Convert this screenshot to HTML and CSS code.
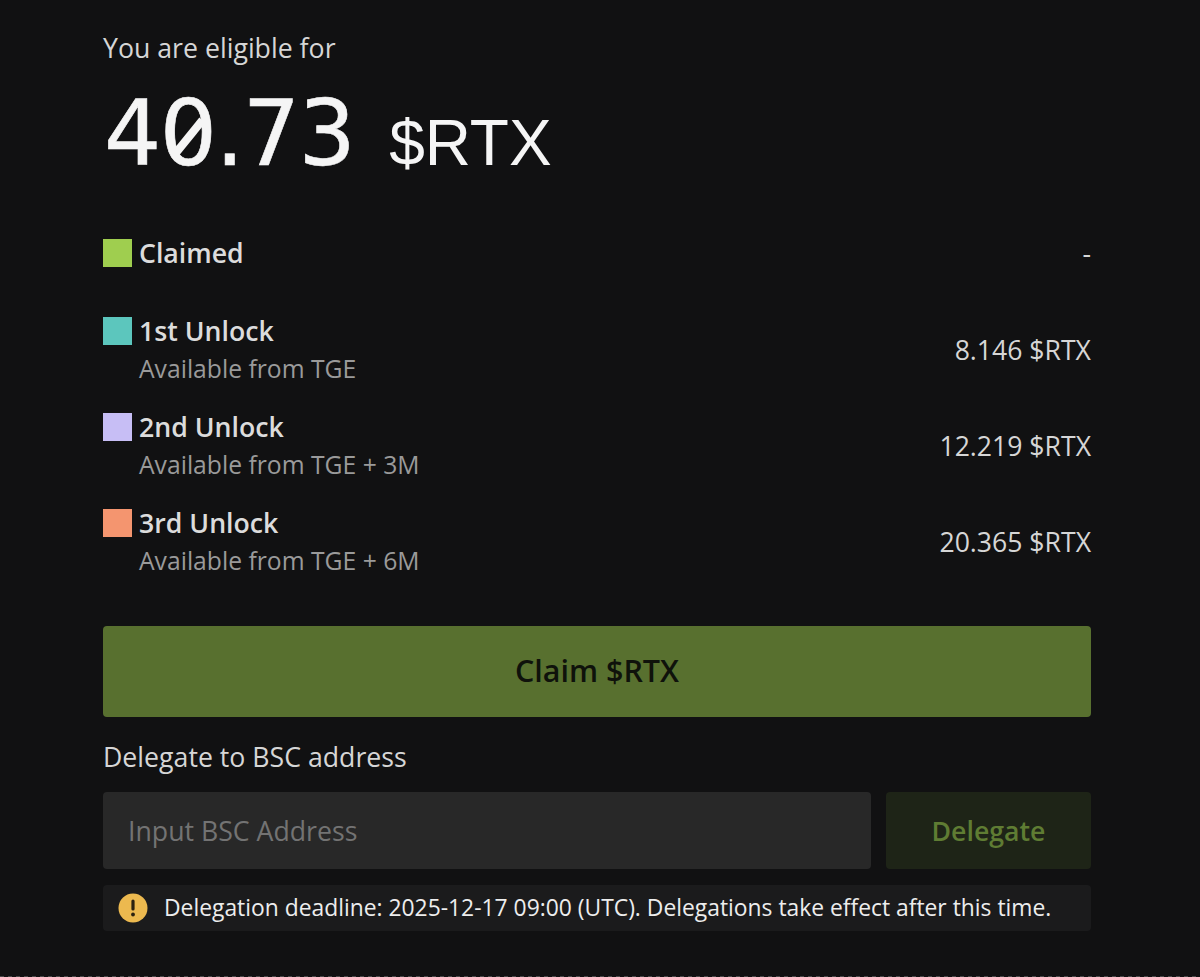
FILE: index.html
```html
<!DOCTYPE html>
<html lang="en">
<head>
<meta charset="utf-8">
<title>Claim $RTX</title>
<link rel="stylesheet" href="styles.css">
</head>
<body>
<main class="panel">
  <p class="eligible">You are eligible for</p>
  <div class="amount"><span class="amount-num">4<span class="slashed">0<i class="slash"></i></span>.73</span><span class="amount-unit">$RTX</span></div>
  <div class="row row-claimed">
    <div class="row-left"><span class="swatch swatch-green"></span><span class="row-title">Claimed</span></div>
    <span class="row-value">-</span>
  </div>
  <div class="unlocks">
    <div class="row">
      <div class="row-text">
        <div class="row-left"><span class="swatch swatch-teal"></span><span class="row-title">1st Unlock</span></div>
        <div class="row-sub">Available from TGE</div>
      </div>
      <span class="row-value">8.146 $RTX</span>
    </div>
    <div class="row">
      <div class="row-text">
        <div class="row-left"><span class="swatch swatch-lilac"></span><span class="row-title">2nd Unlock</span></div>
        <div class="row-sub">Available from TGE + 3M</div>
      </div>
      <span class="row-value">12.219 $RTX</span>
    </div>
    <div class="row">
      <div class="row-text">
        <div class="row-left"><span class="swatch swatch-orange"></span><span class="row-title">3rd Unlock</span></div>
        <div class="row-sub">Available from TGE + 6M</div>
      </div>
      <span class="row-value">20.365 $RTX</span>
    </div>
  </div>
  <button class="claim" type="button">Claim $RTX</button>
  <div class="delegate-label">Delegate to BSC address</div>
  <div class="delegate-row">
    <div class="input">Input BSC Address</div>
    <button class="delegate" type="button">Delegate</button>
  </div>
  <div class="notice">
    <svg class="notice-icon" width="30" height="30" viewBox="0 0 30 30" aria-hidden="true">
      <circle cx="15" cy="15" r="14.5" fill="#ecb94f"/>
      <path d="M15 8v8" stroke="#2a2110" stroke-width="3.2" stroke-linecap="round" fill="none"/>
      <circle cx="15" cy="21.5" r="1.9" fill="#2a2110"/>
    </svg>
    <span class="notice-text">Delegation deadline: 2025-12-17 09:00 (UTC). Delegations take effect after this time.</span>
  </div>
</main>
<div class="dash"></div>
</body>
</html>
```
FILE: styles.css
```css
* { box-sizing: border-box; }
html, body { margin: 0; height: 977px; overflow: hidden; }
body {
  background: #111112;
  font-family: "Open Sans", "Liberation Sans", sans-serif;
  color: #e0e0e0;
  position: relative;
}
.panel {
  width: 988px;
  margin-left: 103px;
  padding-top: 30px;
  display: flex;
  flex-direction: column;
}
.eligible {
  margin: 0;
  font-size: 26.7px;
  line-height: 36px;
  color: #d6d6d6;
}
.amount {
  margin-top: 22px;
  height: 84px;
  display: flex;
  align-items: baseline;
  color: #f5f5f5;
  font-family: "Liberation Sans", sans-serif;
}
.amount-num {
  font-family: "DejaVu Sans", sans-serif;
  font-size: 90px;
  line-height: 92px;
  letter-spacing: -1.5px;
  margin-left: 1px;
  -webkit-text-stroke: 0.6px #f5f5f5;
}
.slashed { position: relative; display: inline-block; }
.slash {
  position: absolute;
  left: 50%;
  top: 54%;
  width: 46px;
  height: 8px;
  margin: -4px 0 0 -23px;
  background: #f5f5f5;
  transform: rotate(-51deg);
}
.amount-unit {
  font-size: 64px;
  margin-left: 35px;
}
.row {
  display: flex;
  justify-content: space-between;
  align-items: center;
}
.row-claimed { margin-top: 63px; height: 36px; }
.row-left { display: flex; align-items: center; gap: 7.5px; }
.swatch { width: 28.5px; height: 28.5px; flex: none; }
.swatch-green { background: #9fce4f; }
.swatch-teal { background: #5cc6bd; }
.swatch-lilac { background: #c7bef5; }
.swatch-orange { background: #f4956f; }
.row-title { font-size: 26.7px; line-height: 36px; font-weight: 600; color: #dcdcdc; }
.row-value { font-size: 26.6px; line-height: 36px; color: #d6d6d6; }
.row-sub { font-size: 24.7px; line-height: 34px; margin-top: 3px; margin-left: 36px; color: #9a9a9a; }
.unlocks { margin-top: 42px; display: flex; flex-direction: column; gap: 23px; }
.claim {
  margin-top: 48px;
  height: 91px;
  border: 0;
  border-radius: 4px;
  padding: 0 0 3px;
  background: #58702f;
  color: #0f120b;
  font: 600 30.5px "Open Sans", sans-serif;
}
.delegate-label { margin-top: 22px; font-size: 26.7px; line-height: 36px; color: #d6d6d6; }
.delegate-row { margin-top: 17px; display: flex; gap: 15px; height: 77px; }
.input {
  flex: 1;
  background: #282828;
  border-radius: 4px;
  padding-left: 25px;
  display: flex;
  align-items: center;
  font-size: 26.7px;
  color: #737373;
}
.delegate {
  width: 205px;
  border: 0;
  border-radius: 4px;
  background: #1e2417;
  color: #5f7c33;
  font: 600 26.7px "Open Sans", sans-serif;
}
.notice {
  margin-top: 16px;
  height: 46px;
  background: #1b1b1c;
  border-radius: 4px;
  display: flex;
  align-items: center;
  gap: 16px;
  padding-left: 15px;
  font-size: 22.85px;
  color: #ededed;
}
.notice-text { margin-top: -2px; }
.notice-icon { flex: none; }
.dash {
  position: absolute;
  left: 0;
  right: 0;
  bottom: 0;
  height: 1px;
  background: repeating-linear-gradient(90deg, #4a4a4a 0 4px, #111112 4px 8px);
}
```
